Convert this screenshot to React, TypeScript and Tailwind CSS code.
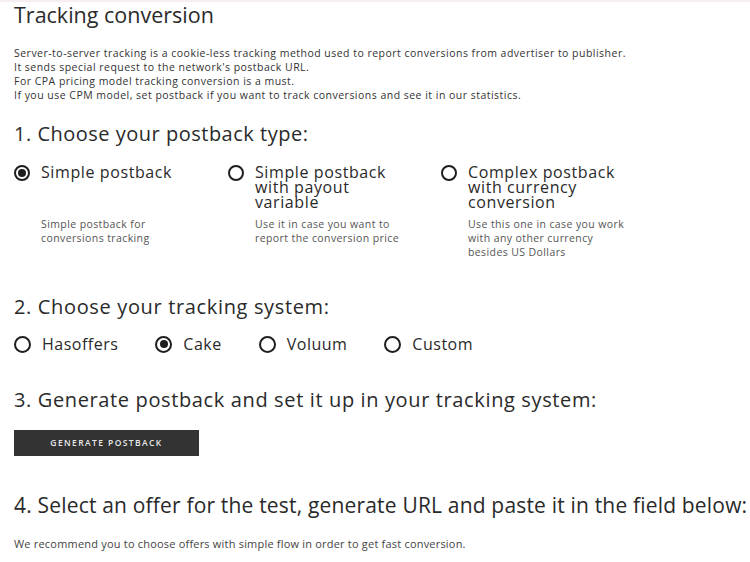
import React from "react";

const font = { fontFamily: '"Open Sans", "Noto Sans", sans-serif' };

function Radio({ checked, size = 16 }: { checked?: boolean; size?: number }) {
  return (
    <span
      className="relative inline-flex shrink-0 items-center justify-center rounded-full border-2 border-[#1e1e1e] bg-white"
      style={{ width: size, height: size }}
    >
      {checked && <span className="block h-[8px] w-[8px] rounded-full bg-[#1e1e1e]" />}
    </span>
  );
}

function TypeOption({
  label,
  desc,
  checked,
}: {
  label: string[];
  desc: string[];
  checked?: boolean;
}) {
  return (
    <div className="flex flex-col">
      <div className="flex min-h-[45px] items-start gap-[11px]">
        <div className="flex h-[15px] items-center">
          <Radio checked={checked} />
        </div>
        <div className="text-[16px] leading-[15px] tracking-[0.6px] text-[#2a2a2a]">
          {label.map((l, i) => (
            <div key={i}>{l}</div>
          ))}
        </div>
      </div>
      <div className="mt-[7px] pl-[27px] text-[10.5px] leading-[14px] tracking-[0.4px] text-[#555]">
        {desc.map((d, i) => (
          <div key={i}>{d}</div>
        ))}
      </div>
    </div>
  );
}

function SystemOption({ label, checked }: { label: string; checked?: boolean }) {
  return (
    <div className="flex items-center gap-[11px]">
      <Radio checked={checked} size={17} />
      <span className="text-[16px] leading-[20px] tracking-[0.5px] text-[#2a2a2a]">{label}</span>
    </div>
  );
}

export default function App() {
  return (
    <div className="min-h-[562px] w-[750px] overflow-hidden border-t-2 border-[#f6eef1] bg-white" style={font}>
      <div className="flex flex-col px-[14px]">
        <h1 className="mt-[0px] text-[21.5px] leading-[26px] font-normal text-[#2a2a2a]">Tracking conversion</h1>
        <div className="mt-[18px] text-[10.5px] leading-[14px] tracking-[0.48px] text-[#333]">
          <div>Server-to-server tracking is a cookie-less tracking method used to report conversions from advertiser to publisher.</div>
          <div>It sends special request to the network's postback URL.</div>
          <div>For CPA pricing model tracking conversion is a must.</div>
          <div>If you use CPM model, set postback if you want to track conversions and see it in our statistics.</div>
        </div>

        <h2 className="mt-[20px] text-[20px] leading-[24px] font-normal tracking-[0.5px] text-[#2a2a2a]">1. Choose your postback type:</h2>
        <div className="mt-[19px] grid grid-cols-[214px_213px_213px]">
          <TypeOption checked label={["Simple postback"]} desc={["Simple postback for", "conversions tracking"]} />
          <TypeOption
            label={["Simple postback", "with payout", "variable"]}
            desc={["Use it in case you want to", "report the conversion price"]}
          />
          <TypeOption
            label={["Complex postback", "with currency", "conversion"]}
            desc={["Use this one in case you work", "with any other currency", "besides US Dollars"]}
          />
        </div>

        <h2 className="mt-[36px] text-[20px] leading-[24px] font-normal tracking-[0.65px] text-[#2a2a2a]">2. Choose your tracking system:</h2>
        <div className="mt-[15px] flex items-center gap-[37px]">
          <SystemOption label="Hasoffers" />
          <SystemOption checked label="Cake" />
          <SystemOption label="Voluum" />
          <SystemOption label="Custom" />
        </div>

        <h2 className="mt-[34px] whitespace-nowrap text-[20px] leading-[24px] font-normal tracking-[0.63px] text-[#2a2a2a]">
          3. Generate postback and set it up in your tracking system:
        </h2>
        <button className="mt-[18px] flex h-[26px] w-[185px] items-center justify-center bg-[#333] text-[8.5px] font-semibold tracking-[1.4px] text-[#e8e8e8]">
          GENERATE POSTBACK
        </button>

        <h2 className="mt-[35px] whitespace-nowrap text-[21px] leading-[28px] font-normal tracking-[0.18px] text-[#2a2a2a]">
          4. Select an offer for the test, generate URL and paste it in the field below:
        </h2>
        <div className="mt-[18px] text-[11px] leading-[14px] tracking-[0.2px] text-[#444]">
          We recommend you to choose offers with simple flow in order to get fast conversion.
        </div>
      </div>
    </div>
  );
}
